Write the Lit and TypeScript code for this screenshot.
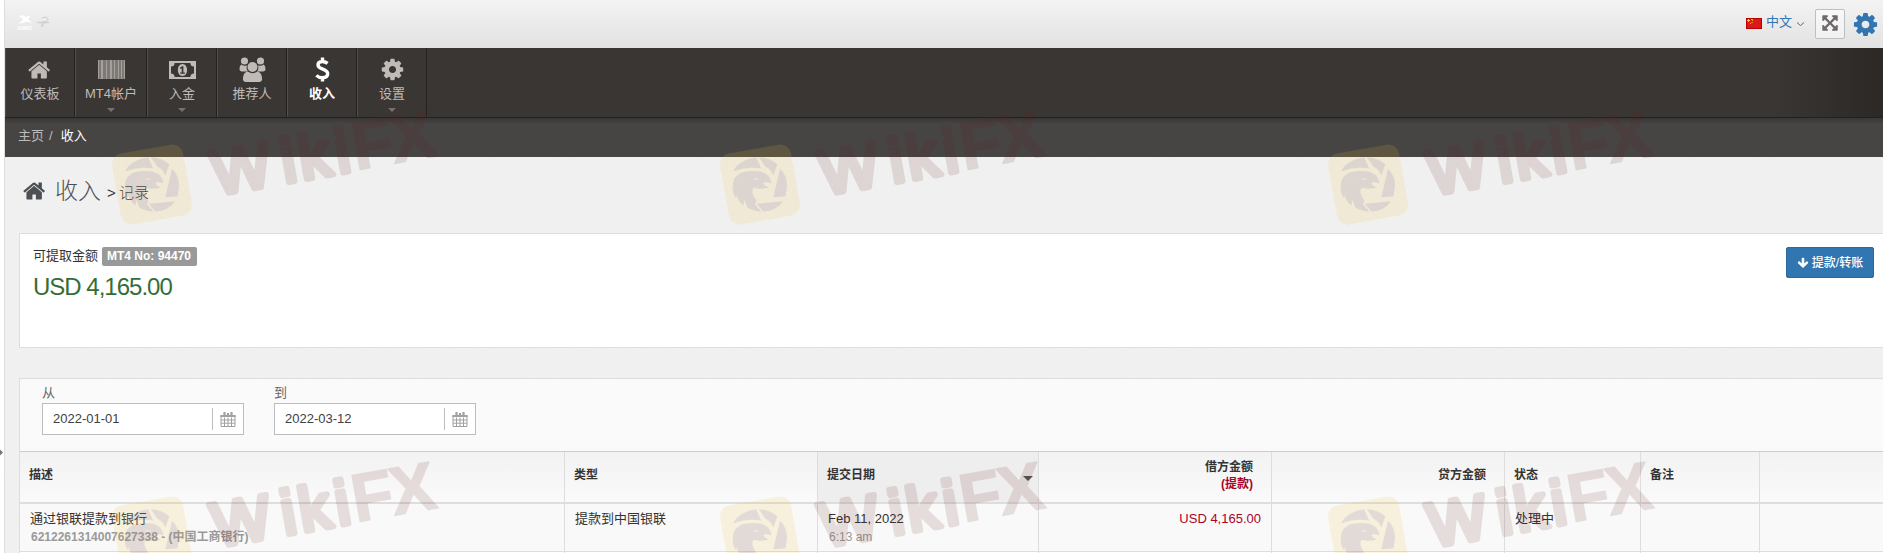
import { LitElement, html, css, svg } from "lit";
import { customElement } from "lit/decorators.js";

const HOME = "M1408 992v480q0 26-19 45t-45 19h-384v-384h-256v384h-384q-26 0-45-19t-19-45v-480q0-1 .5-3t.5-3l575-474 575 474q1 2 1 6zm223-69l-62 74q-8 9-21 11h-3q-13 0-21-7l-692-577-692 577q-12 8-24 7-13-2-21-11l-62-74q-8-10-7-23.5t11-21.5l719-599q32-26 76-26t76 26l244 204v-195q0-14 9-23t23-9h192q14 0 23 9t9 23v408l219 182q10 8 11 21.5t-7 23.5z";
const COG = "M1152 896q0-106-75-181t-181-75-181 75-75 181 75 181 181 75 181-75 75-181zm512-109v222q0 12-8 23t-20 13l-185 28q-19 54-39 91 35 50 107 138 10 12 10 25t-9 23q-27 37-99 108t-94 71q-12 0-26-9l-138-108q-44 23-91 38-16 136-29 186-7 28-36 28h-222q-14 0-24.5-8.5t-11.5-21.5l-28-184q-49-16-90-37l-141 107q-10 9-25 9-14 0-25-11-126-114-165-168-7-10-7-23 0-12 8-23 15-21 51-66.5t54-70.5q-27-50-41-99l-183-27q-13-2-21-12.5t-8-23.5v-222q0-12 8-23t19-13l186-28q14-46 39-92-40-57-107-138-10-12-10-24 0-10 9-23 26-36 98.5-107.5t94.5-71.5q13 0 26 10l138 107q44-23 91-38 16-136 29-186 7-28 36-28h222q14 0 24.5 8.5t11.5 21.5l28 184q49 16 90 37l142-107q9-9 24-9 13 0 25 10 129 119 165 170 7 8 7 22 0 12-8 23-15 21-51 66.5t-54 70.5q26 50 41 98l183 28q13 2 21 12.5t8 23.5z";
const DOWN = "M1675 832q0 53-37 90l-651 652q-39 37-91 37-53 0-90-37l-651-652q-38-36-38-90 0-53 38-91l74-75q39-37 91-37 53 0 90 37l294 294v-704q0-52 38-90t90-38h128q52 0 90 38t38 90v704l294-294q37-37 90-37 52 0 91 37l75 75q37 39 37 91z";
const EXPAND = "M1411 541l-355 355 355 355 144-144q29-31 70-14 39 17 39 59v448q0 26-19 45t-45 19h-448q-42 0-59-40-17-39 14-69l144-144-355-355-355 355 144 144q31 30 14 69-17 40-59 40h-448q-26 0-45-19t-19-45v-448q0-42 40-59 39-17 69 14l144 144 355-355-355-355-144 144q-19 19-45 19-12 0-24-5-40-17-40-59v-448q0-26 19-45t45-19h448q42 0 59 40 17 39-14 69l-144 144 355 355 355-355-144-144q-31-30-14-69 17-40 59-40h448q26 0 45 19t19 45v448q0 42-39 59-13 5-25 5-26 0-45-19z";

const glyph = (d: string, size: number) =>
  html`<svg width=${size} height=${size} viewBox="0 0 1792 1792" fill="currentColor"><path d=${d}></path></svg>`;

const barcode = html`<svg width="27" height="20" viewBox="0 0 27 20" fill="currentColor" shape-rendering="crispEdges">
  <rect width="27" height="19" opacity=".5"></rect>
  ${[[0, 1], [3, 2], [8, 1], [12, 2], [16, 1], [20, 1], [23, 1], [26, 1]].map(
    ([x, w]) => svg`<rect x=${x} width=${w} height="19" opacity=".6"></rect>`)}
  </svg>`;

const money = html`<svg width="27" height="18" viewBox="0 0 27 18" fill="currentColor">
  <path fill-rule="evenodd" d="M0 0h27v18H0zM5.6 2a3.6 3.6 0 0 1-3.6 3.6v6.8A3.6 3.6 0 0 1 5.6 16h15.8a3.6 3.6 0 0 1 3.6-3.6V5.6A3.6 3.6 0 0 1 21.4 2z"></path>
  <path fill-rule="evenodd" d="M13.500 3c3 0 4.600 3 4.600 6s-1.600 6-4.600 6-4.600-3-4.600-6 1.600-6 4.600-6zM13 5.200l-2.200 1.900.9 1 1-.8v4.200h-1.500v1.300h4.700v-1.300h-1.500V5.200z"></path></svg>`;

const people = html`<svg width="27" height="25" viewBox="0 0 27 25" fill="currentColor">
  <circle cx="5.500" cy="4" r="3.600"></circle><circle cx="21.500" cy="4" r="3.600"></circle>
  <path d="M2.200 7.600q3 2 6 .6a6.200 6.200 0 0 0 .6 6.200H3Q.5 14.400.5 11.800T2.200 7.600zM24.800 7.600q-3 2-6 .6a6.200 6.200 0 0 1-.6 6.200H24q2.500 0 2.500-2.600t-1.700-4.200z"></path>
  <circle cx="13.500" cy="10" r="5"></circle>
  <path d="M8.800 14.600q4.700 3.300 9.400 0 4.800.9 4.900 7.400 0 2.800-3 2.900H6.900q-3-.1-3-2.900.1-6.500 4.900-7.400z"></path></svg>`;

const dollar = html`<svg width="15" height="25" viewBox="0 0 15 25" fill="none" stroke="currentColor" stroke-width="3.400">
  <path d="M12.600 6.400Q10 4.400 7.200 4.500 3 4.700 3 8c0 4.800 9.700 3.400 9.700 8.600 0 3-2.200 4.200-5.400 4.200-2.300 0-4.300-.8-5.900-2.400M7.500.5v4M7.500 20.500v4"></path></svg>`;

const calendar = html`<svg width="16" height="15" viewBox="0 0 16 15" fill="none" stroke="#a0a0a0">
  <path d="M1 3.500h14v11H1zM1 8h14M1 11.200h14M4.500 5.500v9M8 5.500v9M11.500 5.500v9"></path>
  <path d="M.5 4h15" stroke-width="2"></path><path d="M4.500 0v4M11.500 0v4M8 1v3" stroke-width="2.200"></path></svg>`;

@customElement("nav-item")
class NavItem extends LitElement {
  static properties = { label: {}, icon: { attribute: false }, active: { type: Boolean }, menu: { type: Boolean } };
  label!: string; icon!: unknown; active!: boolean; menu!: boolean;
  static styles = css`
    :host { display: block; box-sizing: border-box; width: 70px; height: 69px; border-right: 1px solid #242220; border-left: 1px solid #514e4a; color: #c0bbb7; }
    :host([wide]) { width: 72px; }
    .item { display: flex; flex-direction: column; align-items: center; }
    .icon { height: 25px; margin-top: 9px; display: flex; align-items: center; justify-content: center; }
    .label { font-size: 13px; line-height: 20px; margin-top: 2px; white-space: nowrap; }
    .active { color: #fff; font-weight: 700; }
    .caret { margin-top: 4px; border: 4px solid transparent; border-top-color: #74716e; border-bottom: 0; }
  `;
  render() {
    return html`<div class="item ${this.active ? "active" : ""}"><div class="icon">${this.icon}</div>
      <div class="label">${this.label}</div>${this.menu ? html`<i class="caret"></i>` : ""}</div>`;
  }
}

@customElement("water-mark")
class WaterMark extends LitElement {
  static styles = css`
    :host { display: block; width: 608px; height: 352px; }
    svg { display: block; overflow: visible; }
    .thin { font: 400 62px "Liberation Sans", sans-serif; stroke-width: 6px; }
    .thick { font: 700 68px "Liberation Sans", sans-serif; stroke-width: 1.500px; }
  `;
  render() {
    return html`<svg width="340" height="130" viewBox="0 0 340 130">
      <rect x="-36" y="-36" width="72" height="72" rx="11" fill="#f0c032" opacity=".14" transform="translate(43 84.500) rotate(-10)"></rect>
      <g opacity=".13" fill="#6050b0" transform="translate(43 84.500) scale(.3333) translate(-158 -253)">
        <path d="M86 200Q108 176 146 171L162 205Q120 198 78 213z"></path>
        <path d="M155 171Q187 172 210 192L198 226Q190 205 174 200z"></path>
        <path d="M218 206Q240 225 239 262L234 288 198 291z"></path>
        <path d="M148 311L228 303Q205 333 168 334z"></path>
        <path fill-rule="evenodd" d="M76 262Q76 225 106 216q38-7 60 0 24 8 26 34-12-6-22-3-7 5 14 15-26 7-44 0-10 12 0 28 12 15 2 22l20 22q-22 0-42-12l-8-22-4 16q-16-12-20-31l-4 7q-8-12-8-30zM134 236l22-1q-10 8-22 1z"></path>
      </g>
      <g opacity=".125"><text transform="translate(107 95) rotate(-10)" x="0 70 88 125 142 181" fill="#641919" stroke="#641919"
        stroke-linejoin="round"><tspan class="thin">Wiki</tspan><tspan class="thick">FX</tspan></text></g></svg>`;
  }
}

@customElement("app-root")
class AppRoot extends LitElement {
  static styles = css`
    :host { display: block; position: relative; box-sizing: border-box; width: 100%; height: 553px; overflow: hidden; padding-left: 4px; background: #fff;
      font: 13px/20px "Liberation Sans", "Noto Sans CJK SC", sans-serif; color: #333; }
    svg { display: block; }
    .page { box-sizing: border-box; height: 553px; border-left: 1px solid #ddd; background-color: #f2f2f2;
      background-image: url("data:image/svg+xml,%3Csvg xmlns='http://www.w3.org/2000/svg' width='150' height='150'%3E%3Cfilter id='n'%3E%3CfeTurbulence type='fractalNoise' baseFrequency='.5' numOctaves='2' stitchTiles='stitch'/%3E%3CfeColorMatrix type='saturate' values='0'/%3E%3C/filter%3E%3Crect width='150' height='150' filter='url(%23n)' opacity='.06'/%3E%3C/svg%3E"); }
    .top { height: 48px; display: flex; justify-content: space-between; background: linear-gradient(#f3f3f3, #e2e2e2); }
    .logo { margin: 14px 0 0 11px; }
    .tools { display: flex; align-items: flex-start; color: #3276b1; }
    .flag { margin: 18px 4px 0 0; }
    .lang { margin-top: 12px; }
    .chev { margin: 21px 10px 0 4px; }
    .full { box-sizing: border-box; width: 30px; height: 30px; margin: 9px 7px 0 0; border: 1px solid #bfbfbf; border-radius: 2px; background: linear-gradient(#f8f8f8, #f1f1f1); color: #6d6a69; display: flex; align-items: center; justify-content: center; }
    .full svg { margin: -2px 1px 0 0; }
    .gear { margin: 11px 4px 0 0; }
    .nav { display: flex; height: 69px; border-bottom: 1px solid #232120; background: linear-gradient(90deg, #3a3633 0, #3a3633 calc(100% - 110px), #2b2825 100%); }
    .crumbs { box-sizing: border-box; height: 39px; padding: 8px 13px; background: linear-gradient(#383735, #474544 6px); color: #bbb; display: flex; }
    .sep { margin: 0 8px 0 5px; }
    .crumbs b { font-weight: 400; color: #fff; }
    .title { height: 76px; padding: 0 0 0 18px; display: flex; color: #4c4f53; }
    .title svg { margin-top: 22px; }
    .big { font: 300 23px/30px "Noto Sans CJK SC", sans-serif; margin: 17px 6px 0 8px; }
    .small { font: 300 15px/24px "Liberation Sans", "Noto Sans CJK SC", sans-serif; margin-top: 24px; word-spacing: -1px; color: #333; }
    .card { box-sizing: border-box; height: 115px; margin: 0 0 30px 14px; border: 1px solid #ddd; border-right: 0; background: #fff; padding: 13px 9px 0 13px; display: flex; justify-content: space-between; align-items: flex-start; }
    .line { display: flex; height: 20px; line-height: 18px; }
    .badge { height: 19px; margin-left: 4px; padding: 0 6px 0 5px; border-radius: 2px; background: #999; color: #fff; font: 700 12px/18px "Liberation Sans", sans-serif; }
    .sum { font-size: 24px; line-height: 30px; letter-spacing: -1px; color: #356e35; margin-top: 5px; }
    .btn { box-sizing: border-box; width: 88px; height: 31px; border: 1px solid #2c699d; border-radius: 2px; background: #3276b1; color: #fff; display: flex; align-items: center; justify-content: center; gap: 3px; white-space: nowrap; font-size: 12px; font-weight: 500; }
    .panel { margin-left: 14px; border: 1px solid #ddd; border-width: 1px 0 0 1px; background: #fff; }
    .filters { box-sizing: border-box; height: 72px; background: #fafafa; padding: 4px 0 0 22px; display: flex; gap: 30px; color: #666; }
    .field { box-sizing: border-box; width: 202px; height: 32px; border: 1px solid #bdbdbd; background: #fff; color: #404040; display: flex; align-items: center; justify-content: space-between; padding: 0 7px 0 10px; }
    .field i { height: 22px; border-left: 1px solid #bdbdbd; padding-left: 7px; display: flex; align-items: center; }
    .row { display: grid; grid-template-columns: 545px 253px 221px 233px 233px 136px 119px 1fr; }
    .row > div { box-sizing: border-box; border-right: 1px solid #ddd; }
    .row > div:last-child { border-right: 0; }
    .head { height: 53px; box-sizing: border-box; border-top: 1px solid #ccc; border-bottom: 2px solid #ddd; background: linear-gradient(#f2f2f2, #fafafa); font-size: 12px; font-weight: 700; line-height: 17px; }
    .head > div { display: flex; align-items: center; padding: 0 13px 3px 9px; }
    .head .sorted { background: #eee; justify-content: space-between; padding-right: 5px; }
    .sorted i { border: 5px solid transparent; border-top-color: #555; border-bottom: 0; margin-top: 5px; }
    .head .num { justify-content: flex-end; text-align: right; padding-right: 18px; }
    .red { color: #a90329; }
    .body { height: 47px; background: #f9f9f9; border-bottom: 1px solid #ddd; }
    .body > div { padding: 5px 10px 0; line-height: 20px; }
    .body .num { text-align: right; }
    .sub { font-size: 12px; line-height: 17px; color: #999; padding-left: 1px; }
    .next { height: 10px; }
    .marks { position: absolute; left: 109px; top: 100px; width: 1830px; display: grid; grid-template-columns: repeat(3, 608px); pointer-events: none; }
    .knob { position: absolute; left: -3px; top: 450px; width: 5px; height: 5px; background: #777; transform: rotate(45deg); }
    .aims { font: 700 6px "Liberation Sans", sans-serif; }
  `;
  render() {
    const field = (label: string, value: string) =>
      html`<div>${label}<div class="field"><span>${value}</span><i>${calendar}</i></div></div>`;
    return html`<div class="page">
      <div class="top">
        <svg class="logo" width="38" height="18" viewBox="0 0 38 18" fill="#fff">
          <path d="M2 2q5-2 8 1l5-2-3 4 4 4q-4-2-6-1l-8 2 5-4q-1-3-5-4z"></path>
          <text x="1" y="15.500" textLength="15" class="aims">AIMS</text>
          <path d="M26 4q6-2 6 1t-6 3v5q1-3 3-4" fill="none" stroke="#ccc"></path><path d="M21 8.500h12" stroke="#d0d0d0" stroke-width="1.500"></path></svg>
        <div class="tools">
          <svg class="flag" width="16" height="11" viewBox="0 0 16 11"><rect width="16" height="11" fill="#b80000"></rect><rect x="1" y="1" width="14" height="9" fill="#dc1818"></rect>
            <path d="M1 2.500h3M2.500 1v3M5 1.500h1.500v1.200M5.500 4.500h1M4 5.500h1" stroke="#ffde00"></path></svg>
          <span class="lang">中文</span>
          <svg class="chev" width="9" height="6" viewBox="0 0 9 6" fill="none" stroke="currentColor"><path d="M1 1.500l3.500 3 3.500-3"></path></svg>
          <div class="full">${glyph(EXPAND, 18)}</div>
          <div class="gear">${glyph(COG, 27)}</div>
        </div>
      </div>
      <div class="nav">
        <nav-item label="仪表板" .icon=${glyph(HOME, 24)}></nav-item>
        <nav-item wide label="MT4帐户" menu .icon=${barcode}></nav-item>
        <nav-item label="入金" menu .icon=${money}></nav-item>
        <nav-item label="推荐人" .icon=${people}></nav-item>
        <nav-item label="收入" active .icon=${dollar}></nav-item>
        <nav-item label="设置" menu .icon=${glyph(COG, 25)}></nav-item>
      </div>
      <div class="crumbs"><span>主页</span><span class="sep">/</span><b>收入</b></div>
      <div class="title">${glyph(HOME, 24)}<span class="big">收入</span><span class="small">&gt; 记录</span></div>
      <div class="card">
        <div><div class="line">可提取金额<span class="badge">MT4 No: 94470</span></div><div class="sum">USD 4,165.00</div></div>
        <div class="btn">${glyph(DOWN, 12)}<span>提款/转账</span></div>
      </div>
      <div class="panel">
        <div class="filters">${field("从", "2022-01-01")}${field("到", "2022-03-12")}</div>
        <div class="row head"><div>描述</div><div>类型</div><div class="sorted">提交日期<i></i></div>
          <div class="num"><span>借方金额<br><span class="red">(提款)</span></span></div><div class="num">贷方金额</div><div>状态</div><div>备注</div><div></div></div>
        <div class="row body"><div>通过银联提款到银行<div class="sub"><b>6212261314007627338 - (中国工商银行)</b></div></div><div>提款到中国银联</div>
          <div>Feb 11, 2022<div class="sub">6:13 am</div></div><div class="num red">USD 4,165.00</div><div></div><div>处理中</div><div></div><div></div></div>
        <div class="row next"><div></div><div></div><div></div><div></div><div></div><div></div><div></div><div></div></div>
      </div>
    </div>
    <div class="marks">${[0, 1, 2, 3, 4, 5].map(() => html`<water-mark></water-mark>`)}</div>
    <div class="knob"></div>`;
  }
}
